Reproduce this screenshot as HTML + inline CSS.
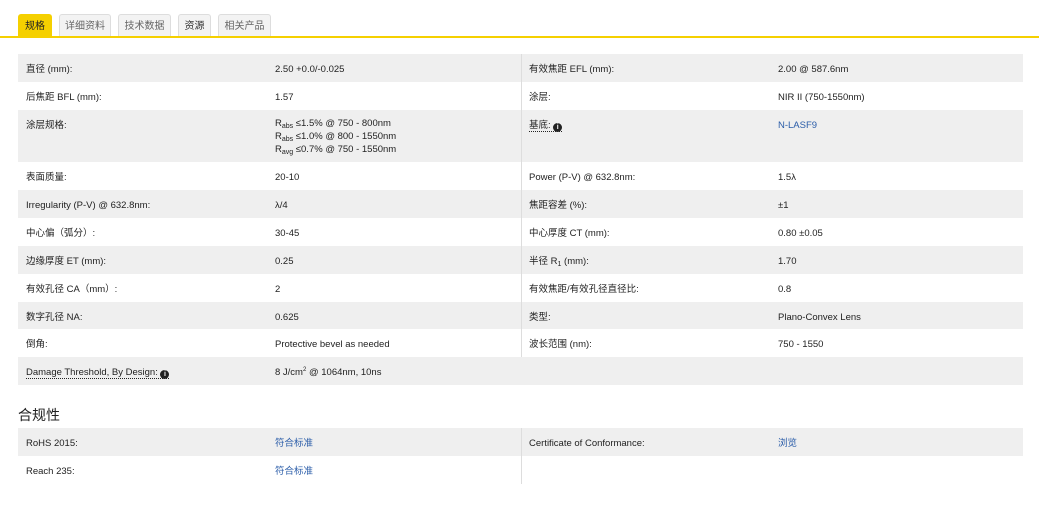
<!DOCTYPE html>
<html><head><meta charset="utf-8"><style>
body{margin:0;width:1039px;height:514px;background:#fff;font-family:"Liberation Sans","Noto Sans CJK SC",sans-serif;font-size:9.5px;color:#222;position:relative;overflow:hidden}
.tab{position:absolute;top:14px;height:23px;line-height:24px;text-align:center;font-size:10px;color:#666;background:#f3f3f3;border:1px solid #ddd;border-bottom:none;border-radius:3px 3px 0 0;box-sizing:border-box}
.tab.on{background:#f5d000;color:#222;border-color:#f5d000}
.line{position:absolute;top:36px;left:0;width:1039px;height:2px;background:#f5d000}
.row{position:absolute;left:18px;width:1005px;box-sizing:border-box}
.g{background:#efefef}
.c{position:absolute;top:9px;line-height:13px}
.div{position:absolute;left:503px;top:0;bottom:0;width:1px;background:#ddd}
a{color:#2a5ca8;text-decoration:none}
sub{font-size:7px;vertical-align:-2px;line-height:0}
sup{font-size:6px;vertical-align:4px;line-height:0}
.i{display:inline-block;width:9px;height:9px;border-radius:50%;background:#222;color:#fff;font-size:7px;line-height:9px;text-align:center;font-weight:bold;vertical-align:-1px}
.u{border-bottom:1px dotted #222}
h3{position:absolute;left:18px;top:405px;margin:0;font-size:14px;font-weight:normal;color:#222}
</style></head><body>
<div class="tab on" style="left:18px;width:34px">规格</div>
<div class="tab" style="left:59px;width:52px">详细资料</div>
<div class="tab" style="left:118px;width:53px">技术数据</div>
<div class="tab" style="left:178px;width:33px;color:#333">资源</div>
<div class="tab" style="left:218px;width:53px">相关产品</div>
<div class="line"></div>

<div class="row g" style="top:54px;height:28px"><div class="div"></div><span class="c" style="left:8px">直径 (mm):</span><span class="c" style="left:257px">2.50 +0.0/-0.025</span><span class="c" style="left:511px">有效焦距 EFL (mm):</span><span class="c" style="left:760px">2.00 @ 587.6nm</span></div>
<div class="row" style="top:82px;height:28px"><div class="div"></div><span class="c" style="left:8px">后焦距 BFL (mm):</span><span class="c" style="left:257px">1.57</span><span class="c" style="left:511px">涂层:</span><span class="c" style="left:760px">NIR II (750-1550nm)</span></div>
<div class="row g" style="top:110px;height:52px"><div class="div"></div><span class="c" style="left:8px">涂层规格:</span><span class="c" style="left:257px;top:7px">R<sub>abs</sub> ≤1.5% @ 750 - 800nm<br>R<sub>abs</sub> ≤1.0% @ 800 - 1550nm<br>R<sub>avg</sub> ≤0.7% @ 750 - 1550nm</span><span class="c" style="left:511px"><span class="u">基底: <span class="i">i</span></span></span><span class="c" style="left:760px"><a>N-LASF9</a></span></div>
<div class="row" style="top:162px;height:28px"><div class="div"></div><span class="c" style="left:8px">表面质量:</span><span class="c" style="left:257px">20-10</span><span class="c" style="left:511px">Power (P-V) @ 632.8nm:</span><span class="c" style="left:760px">1.5λ</span></div>
<div class="row g" style="top:190px;height:28px"><div class="div"></div><span class="c" style="left:8px">Irregularity (P-V) @ 632.8nm:</span><span class="c" style="left:257px">λ/4</span><span class="c" style="left:511px">焦距容差 (%):</span><span class="c" style="left:760px">±1</span></div>
<div class="row" style="top:218px;height:28px"><div class="div"></div><span class="c" style="left:8px">中心偏（弧分）:</span><span class="c" style="left:257px">30-45</span><span class="c" style="left:511px">中心厚度 CT (mm):</span><span class="c" style="left:760px">0.80 ±0.05</span></div>
<div class="row g" style="top:246px;height:28px"><div class="div"></div><span class="c" style="left:8px">边缘厚度 ET (mm):</span><span class="c" style="left:257px">0.25</span><span class="c" style="left:511px">半径 R<sub>1</sub> (mm):</span><span class="c" style="left:760px">1.70</span></div>
<div class="row" style="top:274px;height:28px"><div class="div"></div><span class="c" style="left:8px">有效孔径 CA（mm）:</span><span class="c" style="left:257px">2</span><span class="c" style="left:511px">有效焦距/有效孔径直径比:</span><span class="c" style="left:760px">0.8</span></div>
<div class="row g" style="top:302px;height:27px"><div class="div"></div><span class="c" style="left:8px">数字孔径 NA:</span><span class="c" style="left:257px">0.625</span><span class="c" style="left:511px">类型:</span><span class="c" style="left:760px">Plano-Convex Lens</span></div>
<div class="row" style="top:329px;height:28px"><div class="div"></div><span class="c" style="left:8px">倒角:</span><span class="c" style="left:257px">Protective bevel as needed</span><span class="c" style="left:511px">波长范围 (nm):</span><span class="c" style="left:760px">750 - 1550</span></div>
<div class="row g" style="top:357px;height:28px"><span class="c" style="left:8px"><span class="u">Damage Threshold, By Design: <span class="i">i</span></span></span><span class="c" style="left:257px">8 J/cm<sup>2</sup> @ 1064nm, 10ns</span></div>

<h3>合规性</h3>
<div class="row g" style="top:428px;height:28px"><div class="div"></div><span class="c" style="left:8px">RoHS 2015:</span><span class="c" style="left:257px"><a>符合标准</a></span><span class="c" style="left:511px">Certificate of Conformance:</span><span class="c" style="left:760px"><a>浏览</a></span></div>
<div class="row" style="top:456px;height:28px"><div class="div"></div><span class="c" style="left:8px">Reach 235:</span><span class="c" style="left:257px"><a>符合标准</a></span></div>
</body></html>
